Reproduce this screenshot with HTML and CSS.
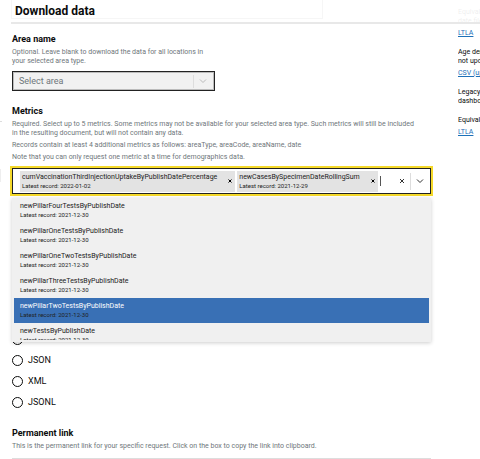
FILE: index.html
```html
<!DOCTYPE html>
<html lang="en">
<head>
<meta charset="utf-8">
<title>Download data</title>
<link rel="stylesheet" href="styles.css">
</head>
<body>
<header class="page-header">
  <div class="title-box"><h1>Download data</h1></div>
</header>
<div class="page">
  <div class="rail"><hr><div class="rail-item"></div></div>
  <main>
    <section class="area">
      <label class="heading" for="area">Area name</label>
      <p class="hint">Optional. Leave blank to download the data for all locations in<br>your selected area type.</p>
      <div class="select-box">
        <select id="area"><option>Select area</option></select>
        <span class="divider"></span>
        <svg class="chevron" viewBox="0 0 10 10"><path d="M2 3.500 5 6.500 8 3.500"/></svg>
      </div>
    </section>
    <section class="metrics">
      <label class="heading" for="metric">Metrics</label>
      <p class="hint">Required. Select up to 5 metrics. Some metrics may not be available for your selected area type. Such metrics will still be included<br>in the resulting document, but will not contain any data.</p>
      <p class="hint">Records contain at least 4 additional metrics as follows: areaType, areaCode, areaName, date</p>
      <p class="hint">Note that you can only request one metric at a time for demographics data.</p>
      <div class="combo">
        <div class="control">
          <div class="tag">
            <div><span class="name">cumVaccinationThirdInjectionUptakeByPublishDatePercentage</span><span class="record">Latest record: 2022-01-02</span></div>
            <button type="button" aria-label="Remove metric"><svg viewBox="0 0 8 8"><path d="M2.500 2.500l3 3m0-3l-3 3"/></svg></button>
          </div>
          <div class="tag">
            <div><span class="name">newCasesBySpecimenDateRollingSum</span><span class="record">Latest record: 2021-12-29</span></div>
            <button type="button" aria-label="Remove metric"><svg viewBox="0 0 8 8"><path d="M2.500 2.500l3 3m0-3l-3 3"/></svg></button>
          </div>
          <span class="caret"></span>
          <input id="metric" type="text">
          <button class="clear" type="button" aria-label="Clear metrics"><svg viewBox="0 0 10 10"><path d="M3 3l4 4m0-4L3 7"/></svg></button>
          <span class="divider"></span>
          <button class="open" type="button" aria-label="Show metrics"><svg viewBox="0 0 10 10"><path d="M2 3.500 5 6.500 8 3.500"/></svg></button>
        </div>
        <div class="menu" role="listbox" aria-label="Metrics">
          <div class="options">
            <div class="option" role="option"><span class="name">newPillarFourTestsByPublishDate</span><span class="record">Latest record: 2021-12-30</span></div>
            <div class="option" role="option"><span class="name">newPillarOneTestsByPublishDate</span><span class="record">Latest record: 2021-12-30</span></div>
            <div class="option" role="option"><span class="name">newPillarOneTwoTestsByPublishDate</span><span class="record">Latest record: 2021-12-30</span></div>
            <div class="option" role="option"><span class="name">newPillarThreeTestsByPublishDate</span><span class="record">Latest record: 2021-12-30</span></div>
            <div class="option active" role="option" aria-selected="true"><span class="name">newPillarTwoTestsByPublishDate</span><span class="record">Latest record: 2021-12-30</span></div>
            <div class="option" role="option"><span class="name">newTestsByPublishDate</span><span class="record">Latest record: 2021-12-30</span></div>
          </div>
        </div>
      </div>
    </section>
    <section class="formats">
      <label><input type="radio" name="format">CSV</label>
      <label><input type="radio" name="format">JSON</label>
      <label><input type="radio" name="format">XML</label>
      <label><input type="radio" name="format">JSONL</label>
    </section>
    <section class="permanent">
      <h2 class="heading">Permanent link</h2>
      <p class="hint">This is the permanent link for your specific request. Click on the box to copy the link into clipboard.</p>
      <hr>
    </section>
  </main>
  <aside>
    <div class="note"><p>Equivalent<br>date files</p><a href="#ltla">LTLA</a></div>
    <div class="note"><p>Age demographics<br>not updated</p><a href="#csv">CSV (updated)</a></div>
    <div class="note"><p>Legacy<br>dashboard</p></div>
    <div class="note"><p>Equivalent</p><a href="#ltla2">LTLA</a></div>
  </aside>
</div>
</body>
</html>
```
FILE: styles.css
```css
* { box-sizing: border-box; }

body {
  margin: 0;
  overflow: hidden;
  background: #fff;
  color: #0b0c0c;
  font: 7px/9px Roboto, "Noto Sans", sans-serif;
}

h1, h2, p { margin: 0; }

button {
  display: flex;
  flex: none;
  padding: 0;
  border: 0;
  background: none;
}

svg {
  display: block;
  width: 10px;
  height: 10px;
  fill: none;
  stroke: #333;
  stroke-width: 1;
}

.page-header {
  position: sticky;
  top: 0;
  z-index: 2;
  height: 24px;
  margin-left: 11px;
  border-bottom: 2px solid #e8e8e8;
  background: rgba(255, 255, 255, 0.93);
}

.title-box {
  width: 66.5%;
  height: 19px;
  padding: 3px 3px 0;
  border: solid #f6f6f6;
  border-width: 0 1px 1px;
}

h1 { font-size: 12px; line-height: 16px; }

.page {
  display: grid;
  grid-template-columns: 12px minmax(0, 446fr) minmax(0, 22fr);
  margin-top: -24px;
}

.rail { padding-top: 121px; }

.rail hr {
  width: 2px;
  height: 1px;
  margin: 0 0 47px;
  border: 0;
  background: #ddd;
}

.rail-item { width: 1px; height: 13px; background: #eee; }

main { padding-top: 34px; margin-right: 27px; }

.heading {
  display: block;
  margin-bottom: 3px;
  font-size: 9px;
  font-weight: 700;
  line-height: 11px;
}

.hint {
  margin-bottom: 3px;
  color: #6f777b;
}

.divider { flex: none; width: 1px; height: 13px; background: #ddd; }

.select-box {
  display: flex;
  align-items: center;
  gap: 4px;
  width: 203px;
  height: 20px;
  margin-top: 5px;
  padding-right: 6px;
  border: 1px solid #222;
  outline: 1px solid #bbb;
  outline-offset: -2px;
  background: #f1f1f1;
}

select {
  flex: 1;
  padding: 0 6px;
  border: 0;
  appearance: none;
  background: none;
  color: #6f777b;
  font: 9px/16px Roboto, sans-serif;
}

.chevron { stroke: #bbb; }

.metrics { margin-top: 15px; }

.combo { position: relative; margin-top: 6px; }

.control {
  display: flex;
  align-items: center;
  height: 26px;
  padding: 0 5px 0 7px;
  border: 1px solid #222;
  outline: 2px solid #f5d92a;
}

.tag {
  display: flex;
  flex: none;
  align-items: center;
  gap: 9px;
  height: 21px;
  margin-right: 2px;
  padding: 0 1px 0 2px;
  background: #e3e3e3;
}

.tag svg { width: 8px; height: 8px; stroke: #000; }

.name, .record { display: block; color: #222; }
.name { line-height: 10px; }
.record { font-size: 6px; line-height: 8px; }

.caret { width: 1px; height: 10px; background: #555; }

input[type="text"] {
  flex: 1;
  width: 0;
  min-width: 0;
  padding: 0;
  border: 0;
  outline: 0;
  background: none;
}

.clear { margin-right: 3px; }
.control .divider { height: 17px; margin-right: 4px; }

.menu {
  position: absolute;
  top: 30px;
  left: 0;
  z-index: 1;
  width: 100%;
  padding: 0 2px 2px;
  background: #f0f0f0;
  box-shadow: 0 1px 4px rgba(0, 0, 0, 0.2);
}

.options { height: 142px; overflow: hidden; }
.option { height: 25px; padding: 3px 6px; }
.option.active { background: #3970b5; }
.active .name { color: #fff; }

.formats {
  display: grid;
  gap: 9px;
  margin-top: 139px;
}

.formats label {
  display: flex;
  align-items: center;
  gap: 5px;
  font-size: 9px;
  line-height: 12px;
}

.formats input {
  width: 11px;
  height: 11px;
  margin: 0;
  border: 1px solid #0b0c0c;
  border-radius: 50%;
  appearance: none;
}

.permanent { margin-top: 20px; }
.permanent hr { height: 1px; margin: 7px 0 0; border: 0; background: #ddd; }

aside {
  display: grid;
  align-content: start;
  gap: 10px;
  padding-top: 8px;
  overflow: hidden;
  white-space: nowrap;
}

.note a { display: block; margin-top: 3px; color: #1d70b8; }
```
